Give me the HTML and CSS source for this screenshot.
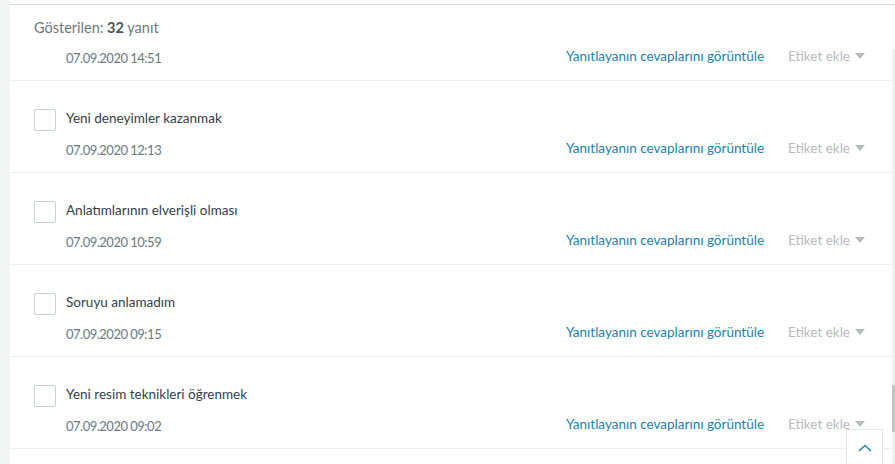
FILE: index.html
```html
<!DOCTYPE html>
<html lang="tr">
<head>
<meta charset="utf-8">
<link rel="stylesheet" href="styles.css">
</head>
<body>
<div class="page">
  <div class="side"></div>
  <main class="main">
    <div class="summary">Gösterilen: <b>32</b> yanıt</div>
    <div class="row first">
      <div class="meta">
        <span class="date">07.09.2020 14:51</span>
        <div class="actions">
          <a class="link">Yanıtlayanın cevaplarını görüntüle</a>
          <span class="tag">Etiket ekle <i class="caret"></i></span>
        </div>
      </div>
    </div>
    <div class="row">
      <div class="answer"><span class="check"></span><span class="text">Yeni deneyimler kazanmak</span></div>
      <div class="meta">
        <span class="date">07.09.2020 12:13</span>
        <div class="actions">
          <a class="link">Yanıtlayanın cevaplarını görüntüle</a>
          <span class="tag">Etiket ekle <i class="caret"></i></span>
        </div>
      </div>
    </div>
    <div class="row">
      <div class="answer"><span class="check"></span><span class="text">Anlatımlarının elverişli olması</span></div>
      <div class="meta">
        <span class="date">07.09.2020 10:59</span>
        <div class="actions">
          <a class="link">Yanıtlayanın cevaplarını görüntüle</a>
          <span class="tag">Etiket ekle <i class="caret"></i></span>
        </div>
      </div>
    </div>
    <div class="row">
      <div class="answer"><span class="check"></span><span class="text">Soruyu anlamadım</span></div>
      <div class="meta">
        <span class="date">07.09.2020 09:15</span>
        <div class="actions">
          <a class="link">Yanıtlayanın cevaplarını görüntüle</a>
          <span class="tag">Etiket ekle <i class="caret"></i></span>
        </div>
      </div>
    </div>
    <div class="row">
      <div class="answer"><span class="check"></span><span class="text">Yeni resim teknikleri öğrenmek</span></div>
      <div class="meta">
        <span class="date">07.09.2020 09:02</span>
        <div class="actions">
          <a class="link">Yanıtlayanın cevaplarını görüntüle</a>
          <span class="tag">Etiket ekle <i class="caret"></i></span>
        </div>
      </div>
    </div>
    <div class="scrollbar"><div class="thumb"></div></div>
    <button class="totop" aria-label="Yukarı">
      <svg width="14" height="8" viewBox="0 0 14 8"><path d="M1 7 L7 1.5 L13 7" fill="none" stroke="#1b87b8" stroke-width="1.5"/></svg>
    </button>
  </main>
</div>
</body>
</html>
```

FILE: styles.css
```css
* { box-sizing: border-box; }
html, body { margin: 0; padding: 0; height: 100%; overflow: hidden; }
body { background: #fff; font-family: Lato, "Noto Sans", sans-serif; font-size: 13.5px; }
.page { display: flex; height: 464px; }
.side { width: 10px; background: #f2f4f4; flex: none; }
.main { flex: 1; position: relative; margin-top: 4px; border-top: 1px solid #d5d8d8; overflow: hidden; }
.summary { padding: 14px 0 0 24px; height: 38px; color: #6b787f; font-size: 14.5px; }
.summary b { color: #4a555c; font-weight: 700; }
.row { border-bottom: 1px solid #eceeee; height: 92px; padding: 28px 30px 0 24px; }
.row.first { height: 38px; padding-top: 3px; }
.answer { display: flex; align-items: flex-start; height: 29px; }
.check { width: 22px; height: 22px; border: 1px solid #c9cdce; border-radius: 2px; flex: none; margin-right: 10px; }
.text { color: #333e48; line-height: 18px; }
.meta { display: flex; justify-content: space-between; align-items: center; padding-left: 32px; height: 20px; }
.date { color: #6b787f; position: relative; top: 2px; font-size: 13px; letter-spacing: -0.5px; }
.actions { display: flex; align-items: center; }
.link { color: #1b7fa8; margin-right: 24px; }
.tag { color: #b6babc; display: flex; align-items: center; }
.caret { display: inline-block; width: 0; height: 0; border-left: 5.5px solid transparent; border-right: 5.5px solid transparent; border-top: 6px solid #b6babc; margin-left: 5px; }
.scrollbar { position: absolute; right: 0; top: 44px; width: 3px; bottom: 0; background: #f0f0f0; }
.thumb { position: absolute; left: 0; right: 0; top: 336px; height: 47px; background: #c4c4c4; }
.totop { position: absolute; right: 12px; top: 424px; width: 37px; height: 40px; background: #fff; border: 1px solid #e3e5e5; padding: 0; display: flex; justify-content: center; align-items: flex-start; padding-top: 14px; }
```
